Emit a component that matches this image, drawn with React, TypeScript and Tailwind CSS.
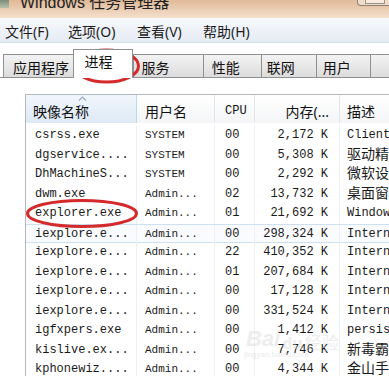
import React from 'react'

// 任务管理器 - 进程 tab
const menus = [
  { label: '文件(F)', w: 'w-[63px]' },
  { label: '选项(O)', w: 'w-[69px]' },
  { label: '查看(V)', w: 'w-[66px]' },
  { label: '帮助(H)', w: 'w-[66px]' },
]

const tabs = [
  { label: '应用程序', w: 'w-[73px]', pl: 'pl-[9px]' },
  { label: '进程', w: 'w-[62px]', pl: 'pl-[10px]', active: true },
  { label: '服务', w: 'w-[72px]', pl: 'pl-[7px]' },
  { label: '性能', w: 'w-[60px]', pl: 'pl-[8px]' },
  { label: '联网', w: 'w-[57px]', pl: 'pl-[5px]' },
  { label: '用户', w: 'w-[56px]', pl: 'pl-[6px]' },
]

type Row = [string, string, string, string, string, boolean?]

const rows: Row[] = [
  ['csrss.exe', 'SYSTEM', '00', '2,172 K', 'Client Server Runtime Process'],
  ['dgservice....', 'SYSTEM', '00', '5,308 K', '驱动精灵服务', true],
  ['DhMachineS...', 'SYSTEM', '00', '2,292 K', '微软设备健康', true],
  ['dwm.exe', 'Admin...', '02', '13,732 K', '桌面窗口管理器', true],
  ['explorer.exe', 'Admin...', '01', '21,692 K', 'Windows 资源管理器'],
  ['iexplore.e...', 'Admin...', '00', '298,324 K', 'Internet Explorer'],
  ['iexplore.e...', 'Admin...', '22', '410,352 K', 'Internet Explorer'],
  ['iexplore.e...', 'Admin...', '01', '207,684 K', 'Internet Explorer'],
  ['iexplore.e...', 'Admin...', '00', '17,128 K', 'Internet Explorer'],
  ['iexplore.e...', 'Admin...', '00', '331,524 K', 'Internet Explorer'],
  ['igfxpers.exe', 'Admin...', '00', '1,412 K', 'persistence Module'],
  ['kislive.ex...', 'Admin...', '00', '7,746 K', '新毒霸实时保护', true],
  ['kphonewiz....', 'Admin...', '00', '4,344 K', '金山手机助手', true],
]

const mono = { fontFamily: '"Liberation Mono", "Noto Sans CJK SC", monospace' }

export default function App() {
  return (
    <div
      className="relative w-[389px] h-[376px] overflow-hidden bg-white text-[#111]"
      style={{ fontFamily: '"Noto Sans", "Noto Sans CJK SC", sans-serif' }}
    >
      {/* 标题栏 */}
      <div className="flex h-[18px] overflow-hidden bg-gradient-to-b from-[#e0b998] to-[#f4e0cd]">
        <div className="mt-0 h-[8px] w-[9px] bg-gradient-to-b from-[#7d8c78] to-[#b7c2ae]" />
        <div
          className="ml-[11px] -mt-[5px] text-[16px] leading-4 text-[#222]"
          style={{ fontFamily: '"Liberation Sans", "Noto Sans CJK SC", sans-serif' }}
        >
          Windows 任务管理器
        </div>
        <div className="ml-auto mr-[-4px] flex h-[6px] w-[36px] justify-center rounded-bl-[4px] border border-t-0 border-[#8b8175] bg-[#efdccb]">
          <div className="h-[4px] w-[20px] border border-t-0 border-[#9c9288] bg-[#f8ece0]" />
        </div>
      </div>

      {/* 菜单栏 */}
      <div className="flex h-[25px] items-center border-b border-[#d6dde7] bg-gradient-to-b from-[#f7f9fc] to-[#e5ebf4] pl-[5px] pt-[2px] text-[14px] text-[#1c1c1c]">
        {menus.map((m) => (
          <div key={m.label} className={m.w}>
            {m.label}
          </div>
        ))}
      </div>

      {/* 选项卡 */}
      <div className="mt-[6px] flex h-[29px] items-end border-b border-[#8e9091] pl-[3px]">
        {tabs.map((t) =>
          t.active ? (
            <div
              key={t.label}
              className={`relative z-10 -mb-px h-[29px] ${t.w} ${t.pl} border-x border-t border-[#8e9091] bg-white pt-[2px] text-[14px] leading-[20px]`}
            >
              {t.label}
            </div>
          ) : (
            <div
              key={t.label}
              className={`h-[23px] ${t.w} ${t.pl} border-l border-t border-[#8e9091] bg-gradient-to-b from-[#f3f3f3] to-[#dcdcdc] pt-[3px] text-[14px] leading-[20px]`}
            >
              {t.label}
            </div>
          )
        )}
        <div className="h-[23px] w-[20px] border-l border-t border-[#8e9091] bg-gradient-to-b from-[#f3f3f3] to-[#dcdcdc]" />
      </div>

      {/* 进程列表 */}
      <div className="ml-[25px] mt-[16px] border-l border-t border-[#b4b8bd]">
        <div className="grid h-[28px] grid-cols-[111px_78px_40px_85px_1fr] text-[14px]">
          <div className="relative flex items-center border-r border-[#c7d6e6] bg-gradient-to-b from-[#f1f6fc] to-[#dde9f6] pl-[7px] pt-[4px]">
            映像名称
            <svg className="absolute left-[52px] top-[1px]" width="9" height="5" viewBox="0 0 9 5">
              <path d="M1 4.5 L4.5 1 L8 4.5" fill="none" stroke="#97a9bf" strokeWidth="1.2" />
            </svg>
          </div>
          <div className="flex items-center border-r border-[#e2e4e7] bg-gradient-to-b from-white to-[#f4f5f7] pl-[8px] pt-[4px]">
            用户名
          </div>
          <div
            className="flex items-center border-r border-[#e2e4e7] bg-gradient-to-b from-white to-[#f4f5f7] pl-[10px] pt-[4px] text-[12px]"
            style={mono}
          >
            CPU
          </div>
          <div className="flex items-center justify-end border-r border-[#e2e4e7] bg-gradient-to-b from-white to-[#f4f5f7] pr-[10px] pt-[4px]">
            内存(...
          </div>
          <div className="flex items-center bg-gradient-to-b from-white to-[#f4f5f7] pl-[7px] pt-[4px] whitespace-nowrap">
            描述
          </div>
        </div>

        <div className="pt-[3px] text-[12px] text-[#1a1a1a]" style={mono}>
          {rows.map((r, i) => (
            <div
              key={i}
              className={
                'grid h-[19.5px] grid-cols-[111px_78px_40px_85px_1fr] items-center ' +
                (i === 5 ? 'border-y border-[#cfe0f3] bg-[#f9fbfe]' : '')
              }
            >
              <div className="h-full border-r border-[#eceff3] pl-[9px] leading-[19.5px] whitespace-nowrap">{r[0]}</div>
              <div className="h-full border-r border-[#eceff3] pl-[8px] text-[11px] leading-[19.5px] whitespace-nowrap">{r[1]}</div>
              <div className="h-full border-r border-[#eceff3] pl-[10px] leading-[19.5px]">{r[2]}</div>
              <div className="h-full border-r border-[#eceff3] pr-[11px] text-right leading-[19.5px] whitespace-nowrap">{r[3]}</div>
              <div
                className={
                  'h-full overflow-hidden pl-[7px] whitespace-nowrap ' +
                  (r[5] ? 'text-[14px] leading-[19.5px]' : 'leading-[19.5px]')
                }
              >
                {r[4]}
              </div>
            </div>
          ))}
        </div>
      </div>

      {/* 水印 */}
      <div className="pointer-events-none absolute left-[246px] top-[322px] flex items-end gap-[2px] text-[#d4d4d4] opacity-40">
        <span className="text-[22px] font-bold italic" style={{ fontFamily: '"Liberation Sans", sans-serif' }}>
          Bai
        </span>
        <span className="text-[16px] font-bold">du</span>
        <span className="text-[17px]">经验</span>
      </div>
      <div
        className="pointer-events-none absolute left-[244px] top-[349px] text-[8px] text-[#d6d6d6] opacity-50"
        style={{ fontFamily: '"Liberation Sans", sans-serif' }}
      >
        jingyan.baidu.com
      </div>

      {/* 红圈标注 */}
      <svg className="pointer-events-none absolute left-0 top-0" width="389" height="376">
        <ellipse cx="106.5" cy="66" rx="32" ry="16" fill="none" stroke="#d42a2c" strokeWidth="3" />
        <ellipse cx="82" cy="213.5" rx="54.5" ry="13" fill="none" stroke="#d42a2c" strokeWidth="3" />
      </svg>
    </div>
  )
}
